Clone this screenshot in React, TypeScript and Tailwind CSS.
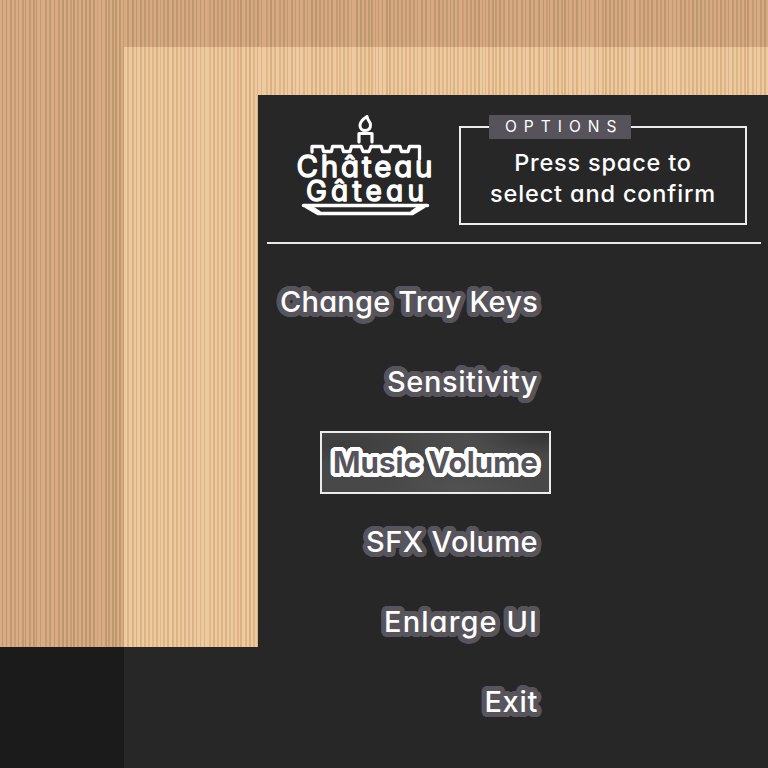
import React from 'react';

// Slat profile shared by every wood surface: [offset, width, depth] per slat.
const slats: [number, number, number][] = (() => {
  const out: [number, number, number][] = [];
  let seed = 11;
  const rnd = () => {
    seed = (seed * 16807) % 2147483647;
    return seed / 2147483647;
  };
  let x = 2;
  while (x < 770) {
    const w = rnd() < 0.22 ? 1 : 2;
    out.push([x, w, 0.65 + rnd() * 0.25]);
    const r = rnd();
    x += r < 0.14 ? 3 : r < 0.88 ? 4 : 5;
  }
  return out;
})();

// Vertical slat gradient for a surface that starts at page column `from`.
function wood(from: number, dark: boolean): React.CSSProperties {
  const color = dark ? '178,144,98' : '211,169,116';
  const warm = dark ? '190,145,103' : '219,167,120';
  const stops: string[] = [];
  slats.forEach(([x, w, d], i) => {
    const a = x - from;
    if (a < 0) return;
    const c = i % 7 === 3 ? warm : color;
    stops.push(`rgba(${c},0) ${a}px, rgba(${c},${(d * 0.85).toFixed(2)}) ${a}px, rgba(${c},${(d * 0.85).toFixed(2)}) ${a + w}px, rgba(${c},0) ${a + w}px`);
  });
  return { backgroundImage: `linear-gradient(90deg, ${stops.join(',')})` };
}

function ring(radius: number, color: string) {
  const parts: string[] = [];
  for (let r = radius; r > 0; r -= 1.5) {
    for (let i = 0; i < 32; i++) {
      const a = (i / 32) * Math.PI * 2;
      parts.push(`${(Math.cos(a) * r).toFixed(2)}px ${(Math.sin(a) * r).toFixed(2)}px 0 ${color}`);
    }
  }
  return parts.join(',');
}

const slateRing = ring(5, '#57545c');
const whiteRing = ring(4, '#ffffff');

const items = [
  { label: 'Change Tray Keys', spacing: 'tracking-[0.2px]' },
  { label: 'Sensitivity', spacing: 'tracking-[0.6px]' },
  { label: 'Music Volume', spacing: 'tracking-[0.1px]', selected: true },
  { label: 'SFX Volume', spacing: 'tracking-[0.4px]' },
  { label: 'Enlarge UI', spacing: 'tracking-[1.1px]' },
  { label: 'Exit', spacing: 'tracking-[0.7px]' },
];

function Logo() {
  return (
    <svg className="h-[110px] w-[144px]" viewBox="292 110 144 110" fill="none" stroke="#fff" strokeLinecap="round" strokeLinejoin="round">
      <path d="M367 116.500 C363 119 360 122 360 125.500 C360 129 362.500 130.500 365 130.500 C368.500 130.500 370.500 128.500 370.500 125 C370.500 121.500 367.500 121 367 116.500 Z" strokeWidth="3" />
      <path d="M359 142 V133.500 H372 V142" strokeWidth="3.200" />
      <path d="M312 152 V146.500 H322.500 L323.500 151.500 H331.500 L332.500 146.500 H342 L343.500 151.500 H350 L351.500 146.500 H361 L363 151.500 H369 L371 146.500 H381 L382.500 151.500 H389.500 L391 146.500 H400 L401.500 151.500 H408 L409.500 146.500 H419.500 V159" strokeWidth="3.300" />
      <g fill="#fff" strokeWidth="1.400" className="font-['Inter',sans-serif]" style={{ fontFeatureSettings: '"cv11"' }}>
        <text x="296.500" y="177" fontSize="29.500" fontWeight="400" textLength="136" lengthAdjust="spacing">Château</text>
        <text x="306" y="201" fontSize="28" fontWeight="400" textLength="118" lengthAdjust="spacing">Gâteau</text>
      </g>
      <path d="M303.500 205.500 H427.500" strokeWidth="3.400" />
      <path d="M306 206.500 L318 213.500 H412.500 L424 206.500" strokeWidth="3.400" />
      <path d="M311 206.500 L319.500 212 M419 206.500 L411.500 212" strokeWidth="2.500" />
    </svg>
  );
}

export default function App() {
  return (
    <div
      className="flex h-[768px] w-[768px] overflow-hidden bg-[#1b1b1b] font-['Inter',sans-serif] text-white"
      style={{ fontFeatureSettings: '"cv11"' }}
    >
      <div className="h-[647px] w-[124px] shrink-0 bg-[#d9ac85]" style={wood(0, true)} />
      <div className="flex w-[644px] flex-col">
        <div className="h-[47px] shrink-0 bg-[#d8aa83]" style={wood(124, true)} />
        <div className="flex grow bg-[#272727]">
          <div className="h-[600px] w-[134px] shrink-0 bg-[#edcaa1]" style={wood(124, false)} />
          <div className="flex w-[510px] flex-col">
            <div className="h-12 shrink-0 bg-[#edcaa1]" style={wood(258, false)} />
            <header className="flex h-[146px] shrink-0 pl-[34px] pt-[15px]">
              <Logo />
              <div className="relative ml-[23px] mt-4 flex h-[99px] w-[288px] flex-col items-center border-2 border-[#ececec] pt-[19px] text-[23.5px] font-medium leading-[31px]">
                <span className="absolute -top-[13px] left-7 flex h-6 w-[142px] items-center bg-[#57535b] pl-4 text-[15.5px] font-normal leading-none tracking-[7px]">
                  OPTIONS
                </span>
                <p className="whitespace-nowrap tracking-[0.8px]">Press space to</p>
                <p className="whitespace-nowrap tracking-[0.85px]">select and confirm</p>
              </div>
            </header>
            <div className="ml-[9px] mt-px h-[2px] w-[494px] shrink-0 bg-[#e8e8e8]" />
            <nav className="mt-[18px] flex w-[293px] flex-col">
              {items.map((it) =>
                it.selected ? (
                  <div key={it.label} className="flex h-20 items-center justify-end">
                    <div className="flex h-[63px] w-[231px] items-center justify-end border-2 border-[#ececec] bg-[#484848] bg-[radial-gradient(ellipse_at_98%_5%,rgba(25,25,25,0.4),transparent_25%),radial-gradient(ellipse_at_70%_15%,rgba(100,100,100,0.2),transparent_30%),radial-gradient(ellipse_at_60%_95%,rgba(110,110,110,0.25),transparent_40%),radial-gradient(ellipse_at_8%_20%,rgba(35,35,35,0.3),transparent_30%)] pr-[11px]">
                      <span className={`whitespace-nowrap text-[29.5px] font-bold text-[#57545c] ${it.spacing}`} style={{ textShadow: whiteRing }}>
                        {it.label}
                      </span>
                    </div>
                  </div>
                ) : (
                  <div key={it.label} className="flex h-20 items-center justify-end pr-[13px]">
                    <span className={`whitespace-nowrap text-[29px] font-medium ${it.spacing}`} style={{ textShadow: slateRing }}>
                      {it.label}
                    </span>
                  </div>
                ),
              )}
            </nav>
          </div>
        </div>
      </div>
    </div>
  );
}
